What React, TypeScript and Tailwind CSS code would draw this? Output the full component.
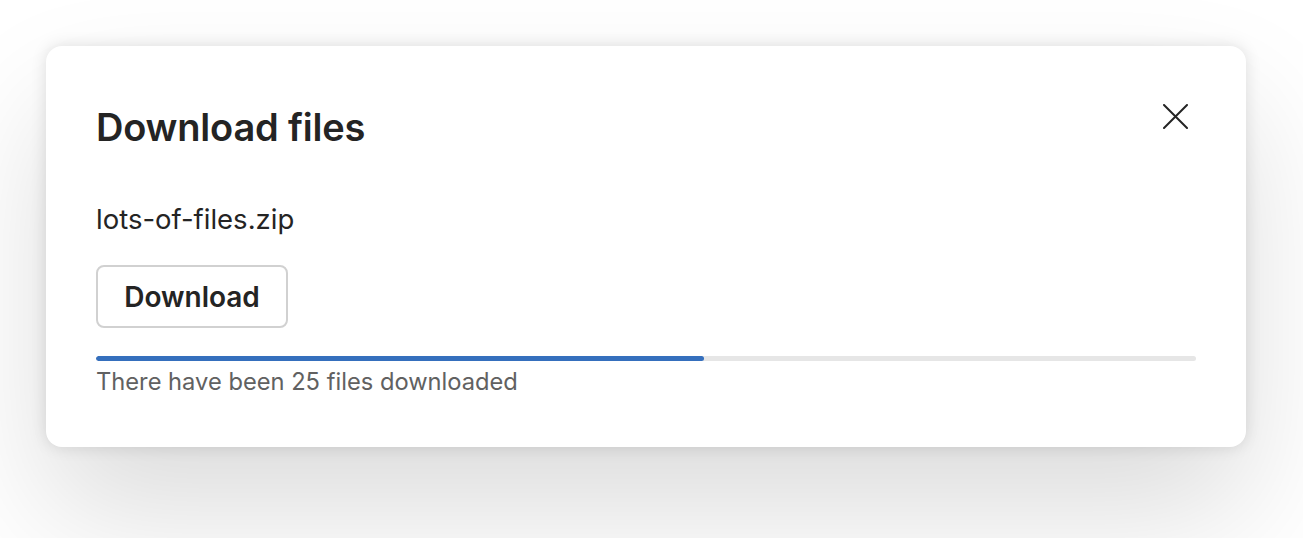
// Dialog "Download files" com barra de progresso.

const progress = 0.553

function CloseIcon() {
  return (
    <svg width="25" height="25" viewBox="0 0 25 25" fill="none" stroke="#242424" strokeWidth="2" strokeLinecap="round">
      <path d="M1 1L24 24M24 1L1 24" />
    </svg>
  )
}

export default function App() {
  return (
    <div className="min-h-[538px] bg-white pl-[46px] pt-[46px]" style={{ fontFamily: 'Inter, "Noto Sans", sans-serif' }}>
      <div className="w-[1200px] h-[401px] rounded-[16px] bg-white px-[50px] pt-[55px] shadow-[0_0_16px_rgba(0,0,0,0.12),0_64px_128px_rgba(0,0,0,0.14)]">
        <div className="flex items-start justify-between">
          <h2 className="text-[38px] leading-[52px] font-semibold text-[#242424] tracking-[-0.2px]">Download files</h2>
          <button className="mt-[3px] mr-[8px] flex h-[25px] w-[25px] items-center justify-center">
            <CloseIcon />
          </button>
        </div>
        <p className="mt-[46px] text-[27.5px] leading-[40px] text-[#242424]">lots-of-files.zip</p>
        <button className="mt-[26px] h-[63px] w-[192px] rounded-[8px] border-2 border-[#d1d1d1] bg-white text-[28px] font-semibold text-[#242424]">
          Download
        </button>
        <div className="mt-[28px] h-[5px] w-[1100px] overflow-hidden rounded-full bg-[#e6e6e6]">
          <div className="h-full rounded-full bg-[#356fbd]" style={{ width: `${progress * 100}%` }} />
        </div>
        <p className="mt-[5px] text-[23.7px] leading-[32px] text-[#616161]">There have been 25 files downloaded</p>
      </div>
    </div>
  )
}
